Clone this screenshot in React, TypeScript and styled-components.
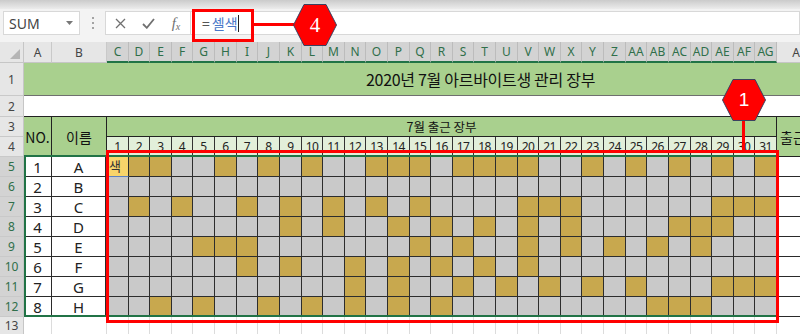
import React from 'react';
import styled, { createGlobalStyle } from 'styled-components';

const GOLD = '#c8a84e';
const GREY = '#c9c9c9';
const EXCEL = '#217346';

const GlobalStyle = createGlobalStyle`
  html, body { margin: 0; padding: 0; background: #fff; }
  body { font-family: "Noto Sans CJK KR", "Noto Sans", sans-serif; }
  * { box-sizing: border-box; }
`;

// 1 = gold (출근), 0 = grey, S = cell being edited
const staff = [
  { no: 1, name: 'A', marks: 'S110010101' + '0011101111' + '0010101010' + '1' },
  { no: 2, name: 'B', marks: '0000000000' + '0000000000' + '0000000000' + '0' },
  { no: 3, name: 'C', marks: '0101001010' + '1010100001' + '1100000011' + '1' },
  { no: 4, name: 'D', marks: '0000000010' + '1001010101' + '0100001110' + '0' },
  { no: 5, name: 'E', marks: '0000111000' + '0000101001' + '0101010100' + '0' },
  { no: 6, name: 'F', marks: '0000001010' + '0101010101' + '0000000000' + '0' },
  { no: 7, name: 'G', marks: '0000000000' + '0101001010' + '1010100011' + '1' },
  { no: 8, name: 'H', marks: '0010100101' + '0101010000' + '0000011100' + '0' },
];

const days = Array.from({ length: 31 }, (_, i) => i + 1);
const dayWidths = days.map((d) => Math.round((d * 670) / 31) - Math.round(((d - 1) * 670) / 31));
const columnTemplate = `24px 28px 55px ${dayWidths.map((w) => `${w}px`).join(' ')} 48px`;
const letters = Array.from({ length: 34 }, (_, n) =>
  n < 26 ? String.fromCharCode(65 + n) : 'A' + String.fromCharCode(65 + n - 26),
);

const Screen = styled.div`
  position: relative;
  width: 800px;
  height: 334px;
  overflow: hidden;
  display: flex;
  flex-direction: column;
  background: #fff;
`;

const Toolbar = styled.div`
  flex: none;
  height: 42px;
  background: #f3f3f3;
`;

const RibbonEdge = styled.div`
  height: 9px;
  background: linear-gradient(#cbcbcb, #e2e2e2 70%, #ececec);
`;

const FormulaRow = styled.div`
  display: flex;
  height: 24px;
  margin-top: 2px;
  padding-left: 3px;
`;

const NameBox = styled.div`
  width: 77px;
  display: flex;
  align-items: center;
  justify-content: space-between;
  padding: 0 6px 0 5px;
  background: #fff;
  border: 1px solid #d8d8d8;
  font: 14px "Noto Sans", sans-serif;
  color: #444;
`;

const Grip = styled.div`
  width: 25px;
  display: flex;
  align-items: center;
  justify-content: center;
`;

const FxBox = styled.div`
  width: 85px;
  display: flex;
  background: #fff;
  border: 1px solid #d8d8d8;
  border-right: none;
`;

const FxSlot = styled.div`
  width: 28px;
  display: flex;
  align-items: center;
  justify-content: center;
  color: #6f6f6f;
`;

const FxLabel = styled.span`
  font: italic 15px "Liberation Serif", serif;
  color: #707070;
  sub {
    font-size: 10px;
    vertical-align: -2px;
  }
`;

const FormulaInput = styled.div`
  flex: 1;
  display: flex;
  align-items: center;
  padding-left: 11px;
  background: #fff;
  border: 1px solid #d8d8d8;
  font: 14px "Noto Sans CJK KR", sans-serif;
  color: #555;
`;

const RefText = styled.span`
  color: #4a78c8;
  margin-left: 2px;
`;

const Caret = styled.span`
  width: 1px;
  height: 17px;
  background: #222;
`;

const Sheet = styled.div<{ $cols: string }>`
  flex: 1;
  min-height: 0;
  width: 825px;
  display: grid;
  grid-template-columns: ${(p) => p.$cols};
  grid-template-rows: 21px 33px 21px 20px 20px repeat(8, 20px) 1fr;
`;

const Corner = styled.div`
  display: flex;
  align-items: flex-end;
  justify-content: flex-end;
  padding: 0 3px 3px 0;
  background: #e6e6e6;
  border-right: 1px solid #c6c6c6;
  border-bottom: 1px solid #c6c6c6;
`;

const ColHead = styled.div<{ $active?: boolean }>`
  display: flex;
  align-items: center;
  justify-content: center;
  white-space: nowrap;
  overflow: hidden;
  font: 12px "Noto Sans", sans-serif;
  color: ${(p) => (p.$active ? '#2f6f4a' : '#444')};
  background: ${(p) => (p.$active ? '#d3d3d3' : '#e6e6e6')};
  border-right: 1px solid ${(p) => (p.$active ? '#bcbcbc' : '#c9c9c9')};
  border-bottom: ${(p) => (p.$active ? `2px solid ${EXCEL}` : '1px solid #c6c6c6')};
`;

const RowHead = styled.div<{ $active?: boolean }>`
  display: flex;
  align-items: center;
  justify-content: center;
  font: 12px "Noto Sans", sans-serif;
  color: ${(p) => (p.$active ? '#2f6f4a' : '#444')};
  background: ${(p) => (p.$active ? '#d3d3d3' : '#e6e6e6')};
  border-right: 1px solid #c6c6c6;
  border-bottom: 1px solid #c9c9c9;
`;

const TitleCell = styled.div`
  grid-column: 2 / -1;
  display: flex;
  align-items: center;
  padding-left: 342px;
  background: #a9d08e;
  border-bottom: 1px solid #6f6f6f;
  font-size: 16px;
  letter-spacing: -0.3px;
  color: #111;
  white-space: nowrap;
`;

const GapRow = styled.div`
  grid-column: 2 / -1;
  background: #fff;
  border-bottom: 1px solid #222;
`;

const HeadCell = styled.div<{ $rows?: number; $cols?: number; $size?: number; $left?: boolean }>`
  grid-row: span ${(p) => p.$rows ?? 1};
  grid-column: span ${(p) => p.$cols ?? 1};
  display: flex;
  align-items: center;
  justify-content: ${(p) => (p.$left ? 'flex-start' : 'center')};
  padding-left: ${(p) => (p.$left ? 3 : 0)}px;
  background: #a9d08e;
  border-right: 1px solid #222;
  border-bottom: 1px solid #222;
  font-size: ${(p) => p.$size ?? 14}px;
  color: #111;
  white-space: nowrap;
  overflow: hidden;
`;

const DayCell = styled.div`
  display: flex;
  align-items: center;
  justify-content: center;
  background: #e2efda;
  border-right: 1px solid #333;
  border-bottom: 1px solid #333;
  font: 12px "Noto Sans", sans-serif;
  letter-spacing: -0.6px;
  color: #222;
`;

const InfoCell = styled.div<{ $wide?: boolean }>`
  display: flex;
  align-items: center;
  justify-content: center;
  background: #fff;
  border-right: ${(p) => (p.$wide ? 2 : 1)}px solid #2a2a2a;
  border-bottom: 1px solid #2a2a2a;
  font: 15px "Noto Sans", sans-serif;
  color: #222;
`;

const MarkCell = styled.div<{ $on: boolean }>`
  background: ${(p) => (p.$on ? GOLD : GREY)};
  border-right: 1px solid #2d2d2d;
  border-bottom: 1px solid #2d2d2d;
`;

const EditCell = styled.div`
  display: flex;
  align-items: flex-start;
  padding: 0 0 0 2px;
  background: #f8d46a;
  border-right: 1px solid #2d2d2d;
  border-bottom: 1px solid #5b7fbf;
  font-size: 13px;
  line-height: 17px;
  color: #333;
`;

const SideCell = styled.div`
  background: #fff;
  border-bottom: 1px solid #2a2a2a;
`;

const EmptyCell = styled.div`
  background: #fff;
  border-right: 1px solid #dcdcdc;
`;

const Selection = styled.div`
  position: absolute;
  left: 24px;
  top: 155px;
  width: 754px;
  height: 162px;
  border: 2px solid ${EXCEL};
  pointer-events: none;
`;

const RangeMark = styled.div`
  position: absolute;
  left: 106px;
  top: 150px;
  width: 673px;
  height: 173px;
  border: 3px solid #ff0000;
`;

const FormulaMark = styled.div`
  position: absolute;
  left: 192px;
  top: 9px;
  width: 62px;
  height: 33px;
  border: 3px solid #ff0000;
`;

const Leader = styled.div<{ $vertical?: boolean }>`
  position: absolute;
  background: #ff0000;
  left: ${(p) => (p.$vertical ? 742 : 254)}px;
  top: ${(p) => (p.$vertical ? 120 : 23)}px;
  width: ${(p) => (p.$vertical ? 3 : 40)}px;
  height: ${(p) => (p.$vertical ? 31 : 3)}px;
`;

const Hex = styled.div<{ $left: number; $top: number; $serif?: boolean }>`
  position: absolute;
  left: ${(p) => p.$left}px;
  top: ${(p) => p.$top}px;
  width: 44px;
  height: 42px;
  display: flex;
  align-items: center;
  justify-content: center;
  color: #fff;
  font-family: ${(p) => (p.$serif ? '"Liberation Serif", serif' : '"Liberation Sans", Arial, sans-serif')};
  font-size: ${(p) => (p.$serif ? 21 : 19)}px;
  svg {
    position: absolute;
    left: 0;
    top: 0;
  }
  span {
    position: relative;
  }
`;

const Badge = ({ left, top, serif, label }: { left: number; top: number; serif?: boolean; label: string }) => (
  <Hex $left={left} $top={top} $serif={serif}>
    <svg width="44" height="42" viewBox="0 0 44 42">
      <polygon points="0.5,21 11,0.5 33,0.5 43.5,21 33,41.5 11,41.5" fill="#ff0000" stroke="#3b4160" strokeWidth="1" />
    </svg>
    <span>{label}</span>
  </Hex>
);

export default function App() {
  return (
    <Screen>
      <GlobalStyle />
      <Toolbar>
        <RibbonEdge />
        <FormulaRow>
          <NameBox>
            SUM
            <svg width="7" height="4" viewBox="0 0 7 4">
              <path d="M0 0h7L3.5 4z" fill="#777" />
            </svg>
          </NameBox>
          <Grip>
            <svg width="2" height="12" viewBox="0 0 2 12">
              <rect x="0" y="0" width="2" height="2" fill="#a3a3a3" />
              <rect x="0" y="5" width="2" height="2" fill="#a3a3a3" />
              <rect x="0" y="10" width="2" height="2" fill="#a3a3a3" />
            </svg>
          </Grip>
          <FxBox>
            <FxSlot>
              <svg width="11" height="11" viewBox="0 0 11 11">
                <path d="M1 1l9 9M10 1l-9 9" stroke="#707070" strokeWidth="1.3" />
              </svg>
            </FxSlot>
            <FxSlot>
              <svg width="13" height="11" viewBox="0 0 13 11">
                <path d="M1 6l3.8 3.8L12 1" stroke="#707070" strokeWidth="1.8" fill="none" />
              </svg>
            </FxSlot>
            <FxSlot>
              <FxLabel>
                f<sub>x</sub>
              </FxLabel>
            </FxSlot>
          </FxBox>
          <FormulaInput>
            =<RefText>셀색</RefText>
            <Caret />
          </FormulaInput>
        </FormulaRow>
      </Toolbar>

      <Sheet $cols={columnTemplate}>
        <Corner>
          <svg width="10" height="10" viewBox="0 0 10 10">
            <path d="M10 0v10H0z" fill="#b5b5b5" />
          </svg>
        </Corner>
        {letters.map((l, i) => (
          <ColHead key={l} $active={i >= 2 && i <= 32}>
            {l}
          </ColHead>
        ))}

        <RowHead>1</RowHead>
        <TitleCell>2020년 7월 아르바이트생 관리 장부</TitleCell>

        <RowHead>2</RowHead>
        <GapRow />

        <RowHead>3</RowHead>
        <HeadCell $rows={2}>NO.</HeadCell>
        <HeadCell $rows={2}>이름</HeadCell>
        <HeadCell $cols={31} $size={12.5}>
          7월 출근 장부
        </HeadCell>
        <HeadCell $rows={2} $size={14} $left>
          출근일수
        </HeadCell>

        <RowHead>4</RowHead>
        {days.map((d) => (
          <DayCell key={d}>{d}</DayCell>
        ))}

        {staff.map((s, r) => (
          <React.Fragment key={s.no}>
            <RowHead $active>{r + 5}</RowHead>
            <InfoCell>{s.no}</InfoCell>
            <InfoCell $wide>{s.name}</InfoCell>
            {s.marks.split('').map((m, i) =>
              m === 'S' ? <EditCell key={i}>색</EditCell> : <MarkCell key={i} $on={m === '1'} />,
            )}
            <SideCell />
          </React.Fragment>
        ))}

        <RowHead>13</RowHead>
        {letters.map((l) => (
          <EmptyCell key={l} />
        ))}
      </Sheet>

      <Selection />
      <RangeMark />
      <Leader $vertical />
      <Badge left={722} top={79} label="1" />
      <FormulaMark />
      <Leader />
      <Badge left={293} top={4} serif label="4" />
    </Screen>
  );
}
